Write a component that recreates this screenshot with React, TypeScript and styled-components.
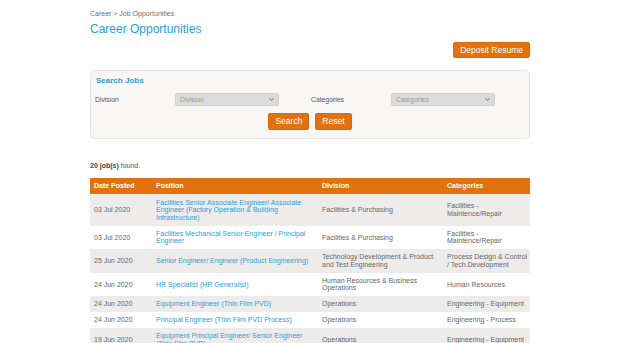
import styled, { createGlobalStyle } from "styled-components";

const GlobalStyle = createGlobalStyle`
  html, body {
    margin: 0;
    padding: 0;
    background: #fff;
    overflow: hidden;
  }
  body {
    font-family: "Liberation Sans", Arial, sans-serif;
    color: #555;
  }
  * { box-sizing: border-box; }
`;

const Page = styled.div`
  width: 440px;
  margin: 0 auto;
  padding-top: 9px;
`;

const Breadcrumb = styled.div`
  font-size: 7px;
  line-height: 10px;
  color: #6f6f6f;
`;

const Title = styled.h1`
  margin: 3px 0 0;
  font-size: 12px;
  line-height: 14px;
  font-weight: 400;
  color: #2a9fd8;
`;

const TopBar = styled.div`
  display: flex;
  justify-content: flex-end;
  margin-top: 6px;
`;

interface ButtonProps {
  $height: number;
}

const Button = styled.button<ButtonProps>`
  height: ${({ $height }) => $height}px;
  padding: 0 6px;
  border: 1px solid #d9690a;
  border-radius: 2px;
  background: #e2720d;
  color: #fff;
  font-family: inherit;
  font-size: 8.5px;
  line-height: 1;
  cursor: pointer;
`;

const Panel = styled.div`
  margin-top: 12px;
  height: 69px;
  padding: 5px 4px 8px;
  background: #f8f7f6;
  border: 1px solid #e6e4e2;
  border-radius: 5px;
`;

const PanelTitle = styled.h3`
  margin: 0 0 0 1px;
  font-size: 8px;
  line-height: 10px;
  font-weight: 700;
  color: #2a9fd8;
`;

const FieldRow = styled.div`
  display: flex;
  gap: 32px;
  margin-top: 7px;
`;

const Field = styled.div`
  display: flex;
  align-items: center;
`;

const Label = styled.span`
  width: 80px;
  font-size: 6.8px;
  color: #555;
`;

const SelectBox = styled.div`
  width: 104px;
  height: 13px;
  padding: 0 4px;
  display: flex;
  align-items: center;
  justify-content: space-between;
  background: #dcdcdc;
  border: 1px solid #d0d0d0;
  border-radius: 2px;
  font-size: 6.8px;
  color: #9a9a9a;
`;

const ButtonRow = styled.div`
  display: flex;
  justify-content: center;
  gap: 6px;
  margin-top: 7px;
`;

const Found = styled.div`
  margin-top: 22px;
  font-size: 7px;
  line-height: 10px;
  color: #555;

  b {
    color: #444;
  }
`;

const Table = styled.table`
  width: 440px;
  margin-top: 7px;
  border-collapse: collapse;
  table-layout: fixed;
  font-size: 7px;
  line-height: 7.6px;
`;

const Th = styled.th`
  padding: 4.4px 2px 4.4px 4px;
  background: #e2720d;
  color: #fff;
  font-weight: 700;
  text-align: left;
`;

const Row = styled.tr`
  &:nth-child(odd) {
    background: #eeeceb;
  }
`;

const Td = styled.td`
  padding: 4.2px 2px 4.2px 4px;
  vertical-align: middle;
  color: #666;
`;

const JobLink = styled.a`
  color: #2a9fd8;
  text-decoration: none;
`;

const Chevron = () => (
  <svg width="5" height="3" viewBox="0 0 5 3">
    <polyline points="0.6,0.5 2.5,2.4 4.4,0.5" fill="none" stroke="#555" strokeWidth="0.9" />
  </svg>
);

const jobs = [
  {
    date: "03 Jul 2020",
    position:
      "Facilities Senior Associate Engineer/ Associate Engineer (Factory Operation & Building Infrastructure)",
    division: "Facilities & Purchasing",
    category: "Facilities - Maintence/Repair",
  },
  {
    date: "03 Jul 2020",
    position: "Facilities Mechanical Senior Engineer / Principal Engineer",
    division: "Facilities & Purchasing",
    category: "Facilities - Maintence/Repair",
  },
  {
    date: "25 Jun 2020",
    position: "Senior Engineer/ Engineer (Product Engineering)",
    division: "Technology Development & Product and Test Engineering",
    category: "Process Design & Control / Tech.Development",
  },
  {
    date: "24 Jun 2020",
    position: "HR Specialist (HR Generalist)",
    division: "Human Resources & Business Operations",
    category: "Human Resources",
  },
  {
    date: "24 Jun 2020",
    position: "Equipment Engineer (Thin Film PVD)",
    division: "Operations",
    category: "Engineering - Equipment",
  },
  {
    date: "24 Jun 2020",
    position: "Principal Engineer (Thin Film PVD Process)",
    division: "Operations",
    category: "Engineering - Process",
  },
  {
    date: "19 Jun 2020",
    position: "Equipment Principal Engineer/ Senior Engineer (Thin Film PVD)",
    division: "Operations",
    category: "Engineering - Equipment",
  },
  {
    date: "19 Jun 2020",
    position: "Process Engineer (Thin Film PVD)",
    division: "Operations",
    category: "Engineering - Process",
  },
];

const App = () => {
  return (
    <>
      <GlobalStyle />
      <Page>
        <Breadcrumb>Career &gt; Job Opportunities</Breadcrumb>
        <Title>Career Opportunities</Title>

        <TopBar>
          <Button $height={16}>Deposit Resume</Button>
        </TopBar>

        <Panel>
          <PanelTitle>Search Jobs</PanelTitle>
          <FieldRow>
            <Field>
              <Label>Division</Label>
              <SelectBox>
                Division
                <Chevron />
              </SelectBox>
            </Field>
            <Field>
              <Label>Categories</Label>
              <SelectBox>
                Categories
                <Chevron />
              </SelectBox>
            </Field>
          </FieldRow>
          <ButtonRow>
            <Button $height={17}>Search</Button>
            <Button $height={17}>Reset</Button>
          </ButtonRow>
        </Panel>

        <Found>
          <b>20 job(s)</b> found.
        </Found>

        <Table>
          <colgroup>
            <col style={{ width: 62 }} />
            <col style={{ width: 166 }} />
            <col style={{ width: 125 }} />
            <col style={{ width: 87 }} />
          </colgroup>
          <thead>
            <tr>
              <Th>Date Posted</Th>
              <Th>Position</Th>
              <Th>Division</Th>
              <Th>Categories</Th>
            </tr>
          </thead>
          <tbody>
            {jobs.map((job, i) => (
              <Row key={i}>
                <Td>{job.date}</Td>
                <Td>
                  <JobLink href="#">{job.position}</JobLink>
                </Td>
                <Td>{job.division}</Td>
                <Td>{job.category}</Td>
              </Row>
            ))}
          </tbody>
        </Table>
      </Page>
    </>
  );
};

export default App;
